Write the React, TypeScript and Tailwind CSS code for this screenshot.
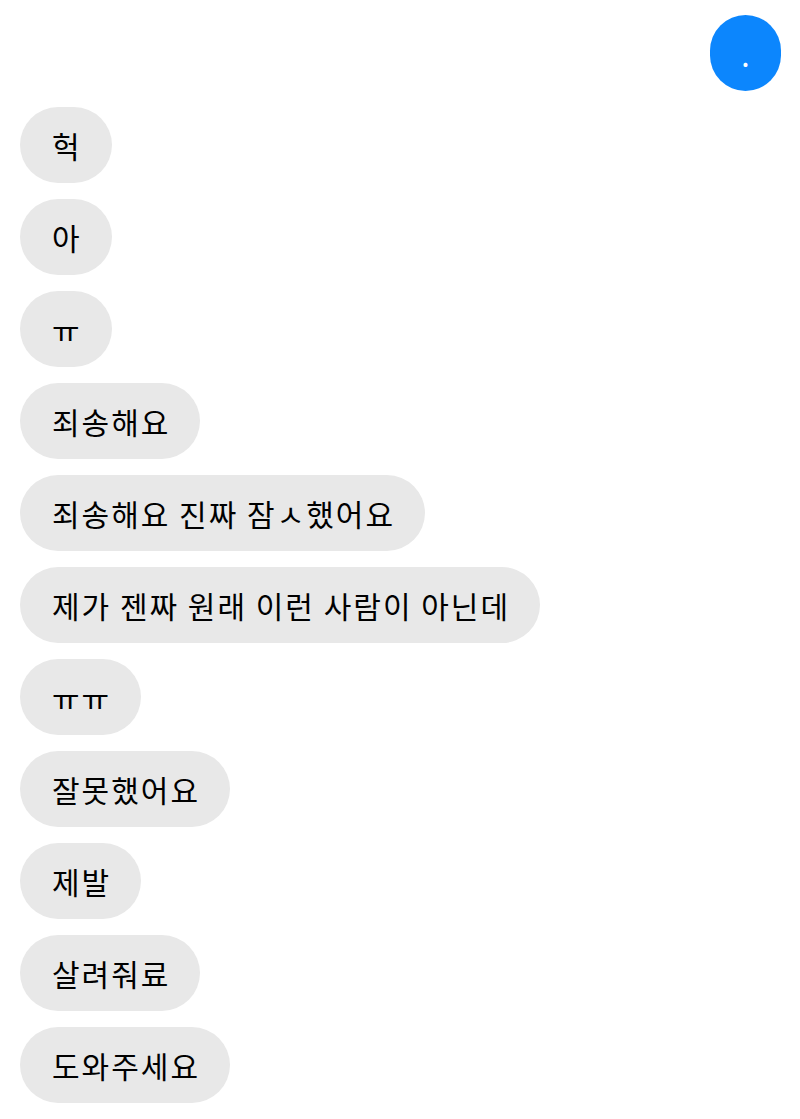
const messages = [
  '헉',
  '아',
  'ㅠ',
  '죄송해요',
  '죄송해요 진짜 잠ㅅ했어요',
  '제가 젠짜 원래 이런 사람이 아닌데',
  'ㅠㅠ',
  '잘못했어요',
  '제발',
  '살려줘료',
  '도와주세요',
]

export default function App() {
  return (
    <div className="min-h-[1119px] w-full bg-white pt-[15px] font-['Noto_Sans_CJK_KR',sans-serif] text-[30px] text-black">
      <div className="flex flex-col gap-[16px]">
        {/* sent bubble */}
        <div className="flex justify-end pr-[19px]">
          <div className="flex h-[76px] w-[71px] items-center justify-center rounded-full bg-[#0c86fd] pt-[3px] text-white">
            .
          </div>
        </div>
        {messages.map((m, i) => (
          <div key={i} className="flex pl-[20px]">
            <div className="flex h-[76px] items-center whitespace-nowrap rounded-full bg-[#e8e8e8] pl-[32px] pr-[30px] leading-none tracking-[2px]">
              {m}
            </div>
          </div>
        ))}
      </div>
    </div>
  )
}
